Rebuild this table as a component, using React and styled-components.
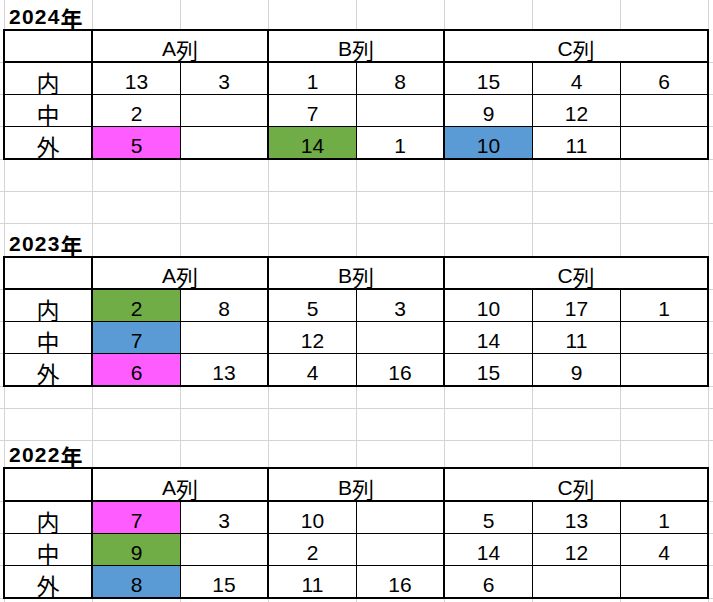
import React from 'react';
import styled, { createGlobalStyle } from 'styled-components';

const GRID = '#d4d4d4';
const INK = '#000';
const FILLS = { pink: '#ff5cff', green: '#70ad47', blue: '#5b9bd5' };

const GlobalStyle = createGlobalStyle`
  *, *::before, *::after { box-sizing: border-box; }
  html, body { margin: 0; padding: 0; background: #fff; }
`;

const Sheet = styled.div`
  width: 713px;
  height: 602px;
  overflow: hidden;
  display: flex;
  flex-direction: column;
  background: #fff;
  font-family: "Liberation Sans", "Noto Sans CJK JP", sans-serif;
  color: ${INK};
`;

const Row = styled.div`
  display: flex;
  flex: none;
  height: ${(p) => p.$h}px;
`;

const Edge = styled.div`
  flex: none;
  width: 5px;
  border-right: 1px solid ${GRID};
  border-bottom: ${(p) => (p.$open ? 'none' : `1px solid ${GRID}`)};
`;

const BlankCell = styled.div`
  flex: none;
  width: 88px;
  border-right: 1px solid ${GRID};
  border-bottom: ${(p) => (p.$open ? 'none' : `1px solid ${GRID}`)};
`;

const Tail = styled.div`
  flex: 1;
  border-bottom: ${(p) => (p.$open ? 'none' : `1px solid ${GRID}`)};
`;

const TitleCell = styled(BlankCell)`
  display: flex;
  align-items: flex-end;
  padding-left: 4px;
  font-size: 21px;
  line-height: 24px;
  font-weight: bold;
  letter-spacing: 1.2px;
  white-space: nowrap;
`;

const Gutter = styled.div`
  flex: none;
  width: 3px;
  border-bottom: 1px solid ${GRID};
`;

const Cell = styled.div`
  flex: none;
  width: ${(p) => p.$w}px;
  display: flex;
  align-items: flex-end;
  justify-content: center;
  padding-bottom: ${(p) => p.$pb || 0}px;
  font-size: 21px;
  line-height: 24px;
  white-space: nowrap;
  background: ${(p) => (p.$fill ? FILLS[p.$fill] : 'transparent')};
  border-top: ${(p) => (p.$top ? `2px solid ${INK}` : 'none')};
  border-left: ${(p) => (p.$left ? `2px solid ${INK}` : 'none')};
  border-right: ${(p) => (p.$thickRight ? 2 : 1)}px solid ${INK};
  border-bottom: ${(p) => p.$bottom}px solid ${INK};
`;

const Kanji = styled.span`
  font-family: "Noto Sans CJK JP", sans-serif;
  font-size: ${(p) => p.$size || 23}px;
  letter-spacing: 0;
`;

function BlankRow({ h }) {
  return (
    <Row $h={h}>
      <Edge />
      {Array.from({ length: 8 }, (_, i) => (
        <BlankCell key={i} />
      ))}
      <Tail />
    </Row>
  );
}

function TitleRow({ h, children }) {
  return (
    <Row $h={h}>
      <Edge $open />
      <TitleCell $open>{children}</TitleCell>
      {Array.from({ length: 7 }, (_, i) => (
        <BlankCell key={i} $open />
      ))}
      <Tail $open />
    </Row>
  );
}

const GROUP_END = [1, 3, 6];

function YearTable({ heights, rows }) {
  return (
    <>
      <Row $h={heights[0]}>
        <Gutter />
        <Cell $w={90} $left $top $thickRight $bottom={2} />
        <Cell $w={176} $top $thickRight $bottom={2}>
          A<Kanji $size={22}>列</Kanji>
        </Cell>
        <Cell $w={176} $top $thickRight $bottom={2}>
          B<Kanji $size={22}>列</Kanji>
        </Cell>
        <Cell $w={264} $top $thickRight $bottom={2}>
          C<Kanji $size={22}>列</Kanji>
        </Cell>
        <Tail />
      </Row>
      {rows.map((r, ri) => {
        const last = ri === rows.length - 1;
        const bottom = last ? 2 : 1;
        return (
          <Row key={r.label} $h={heights[ri + 1]}>
            <Gutter />
            <Cell $w={90} $left $thickRight $bottom={bottom}>
              <Kanji>{r.label}</Kanji>
            </Cell>
            {r.cells.map((c, ci) => {
              const v = typeof c === 'string' ? c : c.v;
              const fill = typeof c === 'string' ? null : c.f;
              return (
                <Cell
                  key={ci}
                  $w={88}
                  $fill={fill}
                  $thickRight={GROUP_END.includes(ci)}
                  $bottom={bottom}
                >
                  {v}
                </Cell>
              );
            })}
            <Tail />
          </Row>
        );
      })}
    </>
  );
}

const t2024 = [
  { label: '内', cells: ['13', '3', '1', '8', '15', '4', '6'] },
  { label: '中', cells: ['2', '', '7', '', '9', '12', ''] },
  {
    label: '外',
    cells: [{ v: '5', f: 'pink' }, '', { v: '14', f: 'green' }, '1', { v: '10', f: 'blue' }, '11', ''],
  },
];

const t2023 = [
  { label: '内', cells: [{ v: '2', f: 'green' }, '8', '5', '3', '10', '17', '1'] },
  { label: '中', cells: [{ v: '7', f: 'blue' }, '', '12', '', '14', '11', ''] },
  { label: '外', cells: [{ v: '6', f: 'pink' }, '13', '4', '16', '15', '9', ''] },
];

const t2022 = [
  { label: '内', cells: [{ v: '7', f: 'pink' }, '3', '10', '', '5', '13', '1'] },
  { label: '中', cells: [{ v: '9', f: 'green' }, '', '2', '', '14', '12', '4'] },
  { label: '外', cells: [{ v: '8', f: 'blue' }, '15', '11', '16', '6', '', ''] },
];

export default function App() {
  return (
    <>
      <GlobalStyle />
      <Sheet>
        <TitleRow h={29}>
          2024<Kanji $size={22}>年</Kanji>
        </TitleRow>
        <YearTable heights={[34, 32, 32, 33]} rows={t2024} />
        <BlankRow h={32} />
        <BlankRow h={32} />
        <TitleRow h={32}>
          2023<Kanji $size={22}>年</Kanji>
        </TitleRow>
        <YearTable heights={[34, 32, 32, 33]} rows={t2023} />
        <BlankRow h={22} />
        <BlankRow h={32} />
        <TitleRow h={26}>
          2022<Kanji $size={22}>年</Kanji>
        </TitleRow>
        <YearTable heights={[35, 32, 32, 33]} rows={t2022} />
        <BlankRow h={32} />
      </Sheet>
    </>
  );
}
